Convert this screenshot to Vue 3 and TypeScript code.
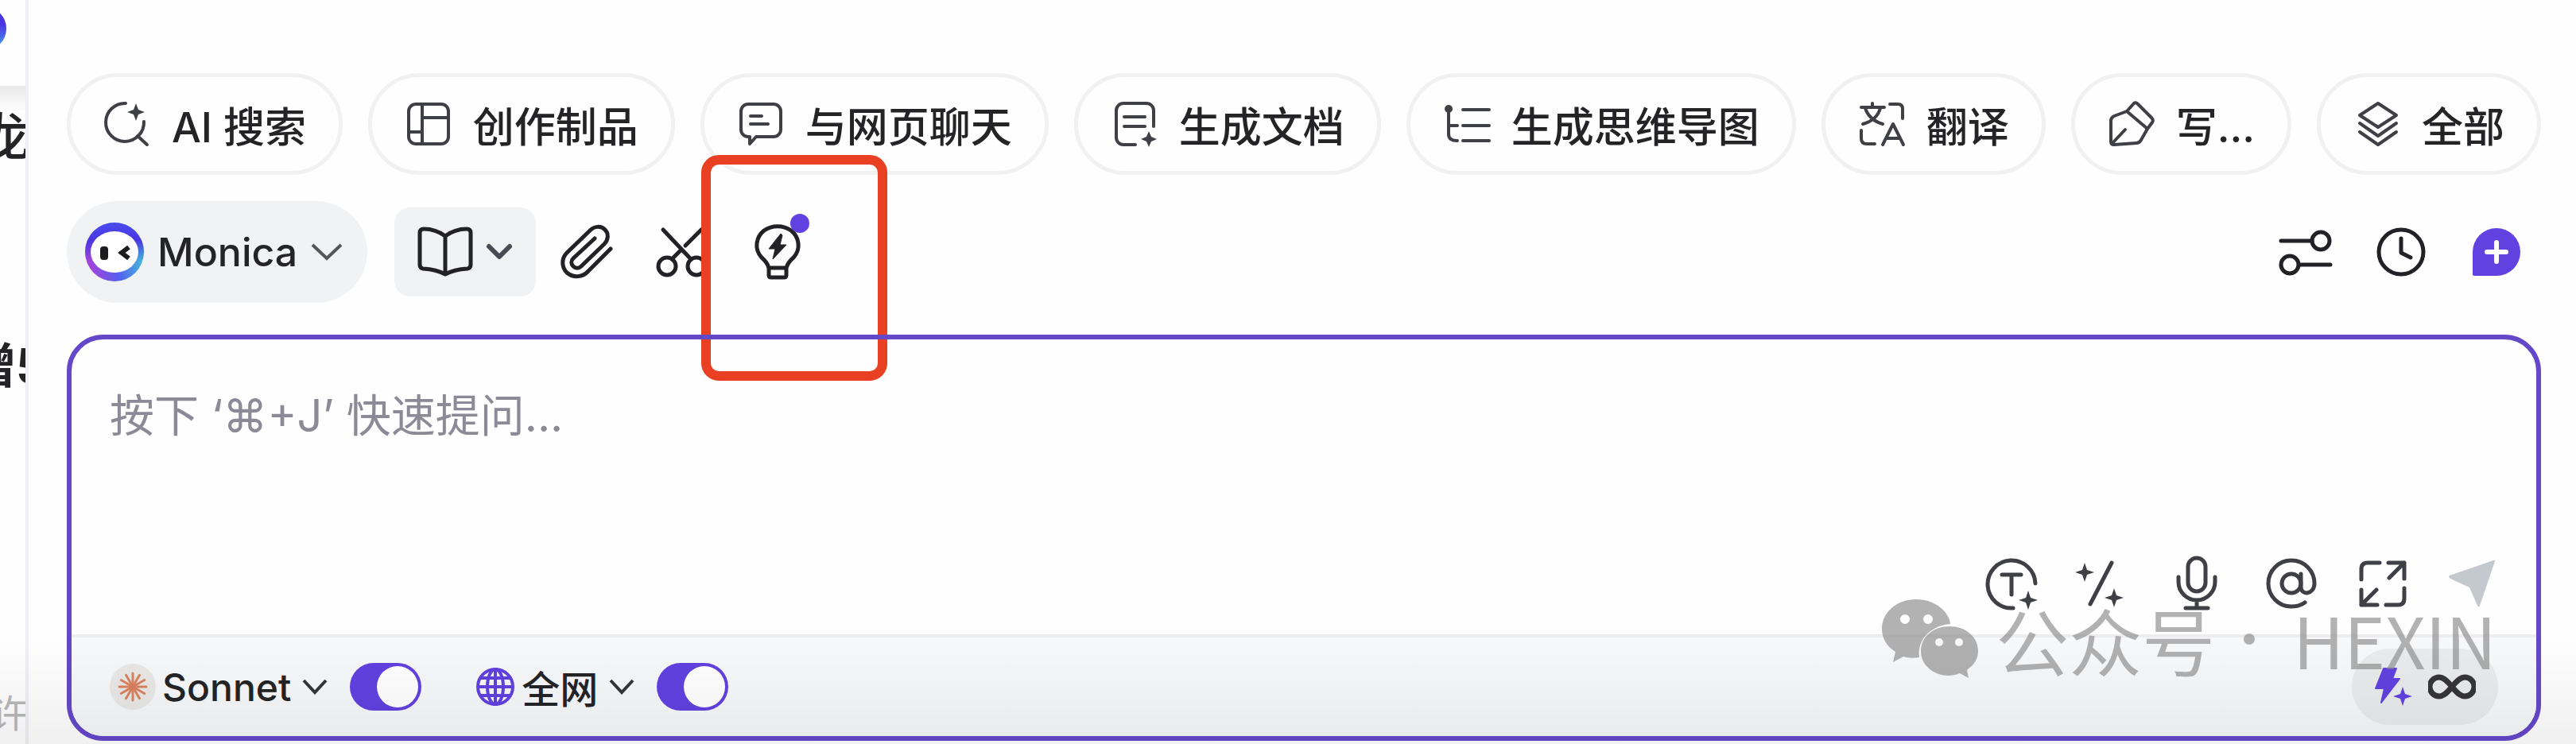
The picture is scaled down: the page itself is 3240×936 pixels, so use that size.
<script setup lang="ts">
import { ref } from 'vue'

interface Chip {
  label: string
  lines: string[]
  fills?: string[]
}

const star = (x: number, y: number, r: number): string => {
  const k = Math.round(r * 0.26)
  return `M${x} ${y - r}L${x + k} ${y - k}L${x + r} ${y}L${x + k} ${y + k}L${x} ${y + r}L${x - k} ${y + k}L${x - r} ${y}L${x - k} ${y - k}Z`
}

const chips: Chip[] = [
  {
    label: 'AI 搜索',
    lines: ['M28 4A24 24 0 1 0 51 27', 'M43 45L55 56'],
    fills: [star(41, 15, 11)],
  },
  {
    label: '创作制品',
    lines: [
      'M14 5H46A9 9 0 0 1 55 14V46A9 9 0 0 1 46 55H14A9 9 0 0 1 5 46V14A9 9 0 0 1 14 5Z',
      'M22 5V55M22 22H55M5 40H22',
    ],
  },
  {
    label: '与网页聊天',
    lines: [
      'M14 5H46A9 9 0 0 1 55 14V37A9 9 0 0 1 46 46H24L16 55V46H14A9 9 0 0 1 5 37V14A9 9 0 0 1 14 5Z',
      'M17 20H31M17 30H39',
    ],
  },
  {
    label: '生成文档',
    lines: ['M31 56H16A9 9 0 0 1 7 47V13A9 9 0 0 1 16 4H45A9 9 0 0 1 54 13V33', 'M17 21H43M17 33H43'],
    fills: [star(48, 49, 10)],
  },
  {
    label: '生成思维导图',
    lines: ['M7 12V43Q7 51 18 51M7 32H18M25 12H58M25 32H58M25 51H58'],
    fills: ['M7 6A5 5 0 1 1 7 16A5 5 0 1 1 7 6Z'],
  },
  {
    label: '翻译',
    lines: [
      'M4 9H33M18 4V9M28 10Q24 25 6 30M9 10Q14 25 31 30',
      'M40 5H50Q56 5 56 11V23M4 38V48Q4 55 11 55H21',
      'M31 56L44 30L57 56M36 48H52',
    ],
  },
  {
    label: '写...',
    lines: [
      'M33 4Q35 2 38 5L55 22Q58 25 56 28L50 36L24 14Z',
      'M24 14L8 20Q4 22 4 26V52Q4 56 8 56L36 54Q40 54 42 50L50 36M6 54L22 37',
    ],
  },
  {
    label: '全部',
    lines: ['M31 4L54 19L31 34L8 19Z', 'M8 29L31 45L54 29M8 40L31 56L54 40'],
  },
]

const prompt = ref('')
const sonnetOn = ref(true)
const webOn = ref(true)
const rays = Array.from({ length: 12 }, (_, i) => i * 30)
</script>

<template>
  <div class="page">
    <aside class="behind" aria-hidden="true">
      <div class="behind-head"><span class="behind-logo"></span></div>
      <p class="behind-line first">龙</p>
      <p class="behind-line second">增5</p>
      <p class="behind-line third">许</p>
    </aside>

    <main class="panel">
      <nav class="chips">
        <button v-for="chip in chips" :key="chip.label" class="chip" type="button">
          <svg class="chip-icon" viewBox="0 0 60 60" aria-hidden="true">
            <path v-for="d in chip.lines" :key="d" :d="d" class="stroke" />
            <path v-for="d in chip.fills" :key="d" :d="d" class="fill" />
          </svg>
          <span>{{ chip.label }}</span>
        </button>
      </nav>

      <div class="toolbar">
        <button class="bot" type="button">
          <svg class="avatar" viewBox="0 0 76 76" aria-hidden="true">
            <defs>
              <linearGradient id="ringA" x1="0.1" y1="0.8" x2="0.95" y2="0.6">
                <stop offset="0" stop-color="#a044d8" />
                <stop offset="0.5" stop-color="#5560f0" />
                <stop offset="1" stop-color="#45b4dc" />
              </linearGradient>
              <linearGradient id="ringB" x1="0" y1="0" x2="0" y2="1">
                <stop offset="0" stop-color="#4a4df0" />
                <stop offset="0.3" stop-color="#4a35e0" />
                <stop offset="0.65" stop-color="#4a35e0" stop-opacity="0" />
              </linearGradient>
            </defs>
            <circle cx="38" cy="38" r="37" fill="url(#ringA)" />
            <circle cx="38" cy="38" r="37" fill="url(#ringB)" />
            <ellipse cx="38" cy="38" rx="30" ry="26" fill="#fff" />
            <rect x="20" y="31" width="10" height="17" rx="4" fill="#1c1c1e" />
            <path d="M56 32L47 39L56 46" fill="none" stroke="#1c1c1e" stroke-width="6" />
          </svg>
          <span class="bot-name">Monica</span>
          <svg class="chev" viewBox="0 0 42 24" aria-hidden="true"><path d="M3 3L21 20L39 3" /></svg>
        </button>

        <button class="book" type="button" aria-label="阅读">
          <svg class="book-icon" viewBox="0 0 72 66" aria-hidden="true">
            <path class="dark" d="M36 13Q24 4 9 4Q4 4 4 9V49Q4 53 8 54Q25 55 36 61Q47 55 64 54Q68 53 68 49V9Q68 4 63 4Q48 4 36 13ZM36 13V61" />
          </svg>
          <svg class="book-chev" viewBox="0 0 36 24" aria-hidden="true"><path d="M5 5L18 18L31 5" /></svg>
        </button>

        <div class="tools">
          <button class="tool" type="button" aria-label="附件">
            <svg viewBox="0 0 72 72" aria-hidden="true">
              <path class="dark" d="M66 32L38 60C31 68 19 69 11 62C4 55 4 44 11 37L40 9C46 3 54 3 59 8C64 13 63 21 58 26L29 54C26 57 22 57 19 54C16 51 16 47 19 44L46 19" />
            </svg>
          </button>
          <button class="tool" type="button" aria-label="截图">
            <svg viewBox="0 0 72 72" aria-hidden="true">
              <path class="dark" d="M12 8L47 45M60 8L40 28M34 34L23 45" />
              <circle class="dark" cx="17" cy="54" r="11" /><circle class="dark" cx="54" cy="54" r="11" />
            </svg>
          </button>
          <button class="tool spotlight" type="button" aria-label="提示">
            <svg viewBox="0 0 72 72" aria-hidden="true">
              <path class="dark" d="M25 56Q23 49 16 43C6 32 9 17 19 9C29 2 43 2 53 9C63 17 66 32 56 43Q49 49 47 56ZM25 56V65Q25 68 28 68H44Q47 68 47 65V56" />
              <path d="M40 13L25 32H33L30 45L47 27H39L42 15Z" fill="#222226" stroke="#222226" stroke-width="1" />
            </svg>
            <span class="dot"></span>
            <span class="frame"></span>
          </button>
        </div>

        <div class="tools end">
          <button class="tool" type="button" aria-label="设置">
            <svg viewBox="0 0 72 72" aria-hidden="true">
              <path class="dark" d="M5 22H44M28 52H67" />
              <circle class="dark" cx="55" cy="22" r="11" /><circle class="dark" cx="16" cy="52" r="11" />
            </svg>
          </button>
          <button class="tool" type="button" aria-label="历史">
            <svg viewBox="0 0 72 72" aria-hidden="true">
              <circle class="dark" cx="36" cy="36" r="28" />
              <path class="dark" d="M36 19V37L48 43" />
            </svg>
          </button>
          <button class="tool" type="button" aria-label="新对话">
            <svg viewBox="0 0 72 72" aria-hidden="true">
              <path d="M36 6A30 30 0 0 1 36 66H8Q6 66 6 64V36A30 30 0 0 1 36 6Z" fill="#6141e0" />
              <path d="M36 24V48M24 36H48" stroke="#fff" stroke-width="6" stroke-linecap="round" />
            </svg>
          </button>
        </div>
      </div>

      <section class="composer">
        <textarea v-model="prompt" class="prompt" aria-label="提问" placeholder="按下 ‘⌘+J’ 快速提问..."></textarea>

        <div class="actions">
          <button class="tool" type="button" aria-label="文本">
            <svg viewBox="0 0 72 72" aria-hidden="true">
              <path class="grey" d="M66 36A30 30 0 1 0 38 67M24 25H48M36 25V50" />
              <path class="fill" :d="star(57, 57, 12)" />
            </svg>
          </button>
          <button class="tool" type="button" aria-label="润色">
            <svg viewBox="0 0 72 72" aria-hidden="true">
              <path class="grey" d="M46 10L19 62" />
              <path class="fill" :d="star(12, 22, 12)" /><path class="fill" :d="star(49, 54, 12)" />
            </svg>
          </button>
          <button class="tool" type="button" aria-label="语音">
            <svg viewBox="0 0 72 72" aria-hidden="true">
              <rect class="grey" x="26" y="4" width="22" height="42" rx="11" />
              <path class="grey" d="M14 28V34A23 23 0 0 0 60 34V28M37 57V66M23 67H51" />
            </svg>
          </button>
          <button class="tool" type="button" aria-label="提及">
            <svg viewBox="0 0 72 72" aria-hidden="true">
              <circle class="grey" cx="40" cy="36" r="12" />
              <path class="grey" d="M52 24V40C52 52 69 50 69 36A29 29 0 1 0 40 65Q50 65 57 60" />
            </svg>
          </button>
          <button class="tool" type="button" aria-label="展开">
            <svg viewBox="0 0 72 72" aria-hidden="true">
              <path class="grey" d="M12 31V18Q12 10 20 10H35M46 10H66V30M66 10L47 29M66 42V55Q66 63 58 63H43M12 44V63H32M12 63L31 44" />
            </svg>
          </button>
          <button class="tool" type="button" aria-label="发送">
            <svg viewBox="0 0 72 72" aria-hidden="true">
              <path d="M7 26Q5 28 8 30L32 41L42 64Q44 67 45 64L64 8Q65 6 62 7Z" fill="#c4c8cf" />
            </svg>
          </button>
        </div>

        <footer class="foot">
          <button class="model" type="button">
            <svg class="badge" viewBox="0 0 58 58" aria-hidden="true">
              <circle cx="29" cy="29" r="29" fill="#e9e8e6" />
              <path v-for="a in rays" :key="a" d="M29 29V12" :transform="`rotate(${a} 29 29)`" stroke="#d9825f" stroke-width="3" stroke-linecap="round" />
            </svg>
            <span>Sonnet</span>
            <svg class="foot-chev" viewBox="0 0 36 24" aria-hidden="true"><path d="M4 4L18 19L32 4" /></svg>
          </button>
          <input v-model="sonnetOn" class="switch" type="checkbox" aria-label="Sonnet" />
          <button class="model web" type="button">
            <svg class="globe" viewBox="0 0 50 50" aria-hidden="true">
              <circle cx="25" cy="25" r="22" /><ellipse cx="25" cy="25" rx="10" ry="22" />
              <path d="M3 25H47M25 3V47M7 14H43M7 36H43" />
            </svg>
            <span>全网</span>
            <svg class="foot-chev" viewBox="0 0 36 24" aria-hidden="true"><path d="M4 4L18 19L32 4" /></svg>
          </button>
          <input v-model="webOn" class="switch" type="checkbox" aria-label="全网" />

          <button class="quota" type="button" aria-label="额度">
            <svg class="bolt" viewBox="0 0 48 50" aria-hidden="true">
              <path d="M12 2H28L23 15H32L9 45L13 27H2Z" fill="#6141e0" stroke="#6141e0" stroke-linejoin="round" stroke-width="2" />
              <path :d="star(36, 37, 12)" fill="#6141e0" />
            </svg>
            <svg class="infinity" viewBox="0 0 60 32" aria-hidden="true">
              <path d="M30 16C22 6 18 4 14 4A12 12 0 0 0 14 28C18 28 22 26 30 16C38 6 42 4 46 4A12 12 0 0 1 46 28C42 28 38 26 30 16Z" />
            </svg>
          </button>
        </footer>

        <div class="mark">
          <svg class="mark-logo" viewBox="0 0 124 102" aria-hidden="true">
            <path fill-rule="evenodd" d="M44 1C68 1 86 17 87 32C64 34 45 50 48 74Q36 76 28 73L15 80L18 67C7 60 1 50 1 38C1 17 20 1 44 1ZM30 20A6 6 0 1 0 30 32A6 6 0 1 0 30 20ZM59 20A6 6 0 1 0 59 32A6 6 0 1 0 59 20Z" />
            <path fill-rule="evenodd" d="M86 35C106 35 122 48 122 66C122 76 117 83 108 90L110 100L99 94Q92 97 86 97C66 97 50 84 50 66C50 48 66 35 86 35ZM73 50A5 5 0 1 0 73 60A5 5 0 1 0 73 50ZM98 50A5 5 0 1 0 98 60A5 5 0 1 0 98 50Z" />
          </svg>
          <span>公众号</span>
          <span class="mark-dot"></span>
          <span class="mark-name">HEXIN</span>
        </div>
      </section>
    </main>
    <div class="shade"></div>
  </div>
</template>

<style>
body {
  margin: 0;
}
</style>

<style scoped>
.page {
  position: relative;
  display: flex;
  min-height: 100vh;
  overflow: hidden;
  background: #fefefe;
  color: #242426;
  font-family: Inter, 'Noto Sans CJK SC', sans-serif;
  font-weight: 500;
}
.page * {
  box-sizing: border-box;
}
button {
  display: flex;
  align-items: center;
  flex: none;
  margin: 0;
  padding: 0;
  border: 0;
  background: none;
  color: inherit;
  font: inherit;
  white-space: nowrap;
  cursor: pointer;
}
svg {
  display: block;
  flex: none;
}
.behind {
  display: flex;
  flex: none;
  flex-direction: column;
  width: 36px;
  overflow: hidden;
  border-right: 4px solid #eeeff2;
  color: #242426;
}
.behind-head {
  height: 108px;
  padding-top: 8px;
}
.behind-logo {
  display: block;
  width: 56px;
  height: 56px;
  margin-left: -48px;
  border-radius: 50%;
  background: linear-gradient(#4a35e0 40%, #4a60e8 65%, #45c4dc);
}
.behind-line {
  margin: 0;
  white-space: nowrap;
  line-height: 80px;
  font-size: 64px;
}
.first {
  height: 312px;
  padding-top: 24px;
  text-indent: -26px;
  background: linear-gradient(#e9e9e9, #fefefe 32px);
}
.second {
  font-size: 60px;
  font-weight: 700;
  text-indent: -40px;
}
.third {
  margin-top: 358px;
  color: #b8b8bb;
  font-size: 48px;
  font-weight: 400;
  text-indent: -12px;
}
.panel {
  display: flex;
  flex: 1;
  flex-direction: column;
  min-width: 0;
  padding: 92px 44px 6px 48px;
}
.chips {
  display: flex;
  justify-content: space-between;
}
.chip {
  gap: 26px;
  height: 128px;
  padding: 0 41px;
  border: 5px solid #f1f1f2;
  border-radius: 64px;
  font-size: 52px;
}
.chip-icon {
  width: 60px;
  height: 60px;
}
.stroke,
.grey,
.dark {
  fill: none;
  stroke: #3f3f46;
  stroke-width: 5;
  stroke-linecap: round;
  stroke-linejoin: round;
}
.stroke {
  stroke-width: 4;
}
.dark {
  stroke: #222226;
}
.fill {
  fill: #3f3f46;
}
.toolbar {
  display: flex;
  align-items: center;
  margin-top: 33px;
}
.bot {
  height: 128px;
  padding: 0 30px 0 22px;
  border-radius: 64px;
  background: #f1f2f4;
}
.avatar {
  width: 76px;
  height: 76px;
}
.bot-name {
  margin: 0 16px;
  font-size: 50px;
}
.chev {
  width: 42px;
  height: 24px;
}
.chev path {
  fill: none;
  stroke: #55555c;
  stroke-width: 4;
}
.book {
  gap: 14px;
  height: 112px;
  margin-left: 34px;
  padding: 0 28px;
  border-radius: 20px;
  background: #f1f2f4;
}
.book-icon {
  width: 72px;
  height: 66px;
}
.book-chev {
  width: 36px;
  height: 24px;
}
.book-chev path {
  fill: none;
  stroke: #4a4a52;
  stroke-width: 6;
  stroke-linecap: round;
  stroke-linejoin: round;
}
.tools {
  display: flex;
  gap: 48px;
  margin-left: 28px;
}
.end {
  margin-left: auto;
  margin-right: 20px;
}
.tool,
.tool svg {
  width: 72px;
  height: 72px;
}
.spotlight {
  position: relative;
}
.dot {
  position: absolute;
  top: -12px;
  right: -4px;
  width: 24px;
  height: 24px;
  border-radius: 50%;
  background: #6141e0;
}
.frame {
  position: absolute;
  inset: -86px -102px -126px -60px;
  border: 12px solid #e94023;
  border-radius: 22px;
  pointer-events: none;
}
.composer {
  position: relative;
  display: flex;
  flex: 1;
  flex-direction: column;
  margin-top: 40px;
  border: 6px solid #6547c9;
  border-radius: 46px;
}
.prompt {
  flex: 1;
  min-height: 200px;
  padding: 60px 48px 0;
  border: 0;
  outline: 0;
  resize: none;
  background: none;
  color: #242426;
  font-family: inherit;
  font-size: 56px;
  font-weight: 400;
  line-height: 72px;
}
.prompt::placeholder {
  color: #8b8a96;
  opacity: 1;
}
.actions {
  display: flex;
  justify-content: flex-end;
  gap: 44px;
  margin-bottom: 28px;
  padding-right: 44px;
}
.foot {
  display: flex;
  align-items: center;
  height: 128px;
  padding: 0 48px;
  border-top: 4px solid #ededef;
  border-radius: 0 0 40px 40px;
  background: #f7f8fa;
}
.model {
  gap: 8px;
  font-size: 48px;
}
.badge {
  width: 58px;
  height: 58px;
}
.globe {
  width: 50px;
  height: 50px;
  fill: none;
  stroke: #6141e0;
  stroke-width: 4;
}
.foot-chev {
  width: 36px;
  height: 24px;
  margin-left: 4px;
}
.foot-chev path {
  fill: none;
  stroke: #35353a;
  stroke-width: 4;
}
.web {
  margin-left: 68px;
}
.switch {
  flex: none;
  width: 90px;
  height: 60px;
  margin: 0 0 0 26px;
  padding: 4px;
  border-radius: 30px;
  background: #c4c8cf;
  appearance: none;
  cursor: pointer;
}
.switch::before {
  display: block;
  width: 52px;
  height: 52px;
  border-radius: 50%;
  background: #fff;
  content: '';
}
.switch:checked {
  background: #6141e0;
}
.switch:checked::before {
  margin-left: auto;
}
.quota {
  gap: 20px;
  height: 96px;
  margin-left: auto;
  padding: 0 28px;
  border-radius: 48px;
  background: #eaebed;
}
.bolt {
  width: 48px;
  height: 50px;
}
.infinity {
  width: 60px;
  height: 32px;
  fill: none;
  stroke: #35353a;
  stroke-width: 7;
}
.mark {
  position: absolute;
  right: 50px;
  bottom: 62px;
  display: flex;
  align-items: center;
  color: #8c8c8c;
  font-family: 'Noto Sans CJK SC', sans-serif;
  font-size: 92px;
  font-weight: 400;
  line-height: 120px;
  opacity: 0.66;
  pointer-events: none;
}
.mark-logo {
  width: 124px;
  height: 102px;
  margin-right: 20px;
  fill: currentColor;
}
.mark-dot {
  width: 14px;
  height: 14px;
  margin: 0 48px 0 36px;
  border-radius: 50%;
  background: currentColor;
}
.mark-name {
  font-size: 88px;
}
.shade {
  position: absolute;
  right: 0;
  bottom: 0;
  left: 0;
  height: 136px;
  background: linear-gradient(rgba(0, 0, 0, 0), rgba(0, 0, 0, 0.06));
  pointer-events: none;
}
</style>
